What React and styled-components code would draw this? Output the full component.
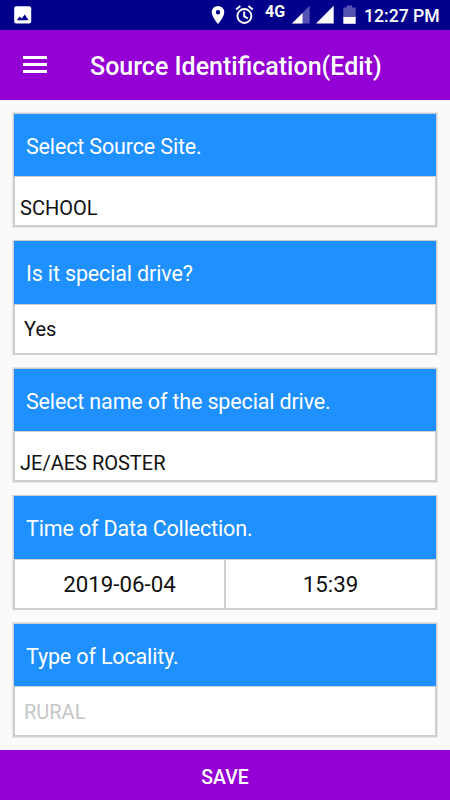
import React from 'react';
import styled, { createGlobalStyle } from 'styled-components';

const GlobalStyle = createGlobalStyle`
  * {
    box-sizing: border-box;
  }
  body {
    margin: 0;
    background: #fafafa;
    font-family: Roboto, sans-serif;
  }`

const Screen = styled.div`
  display: flex;
  flex-direction: column;
  width: 450px;
  height: 800px;
  overflow: hidden;
  background: #fafafa;`

const StatusBar = styled.div`
  display: flex;
  flex: 0 0 30px;
  justify-content: space-between;
  background: #00008b;
  color: #fff;`

const StatusIcons = styled.svg`
  display: block;
  width: ${props => props.$width}px;
  height: 30px;`

const StatusRight = styled.div`
  display: flex;
  width: 250px;
  height: 30px;`

const Network = styled.span`
  width: 27px;
  padding-left: 3px;
  font-size: 16px;
  font-weight: 700;
  line-height: 23px;
  white-space: nowrap;`

const Clock = styled.span`
  padding: 2px 0 0 8px;
  font-size: 17.6px;
  font-weight: 500;
  line-height: 29px;
  white-space: nowrap;`

const TopBar = styled.header`
  display: flex;
  flex: 0 0 70px;
  align-items: center;
  padding-left: 23px;
  background: #9400d3;
  color: #fff;`

const MenuButton = styled.div`
  display: flex;
  flex-direction: column;
  gap: 4px;
  width: 24px;
  margin: 0 43px 1px 0;
  span {
    height: 3px;
    background: #fff;
  }`

const Title = styled.h1`
  margin: 3px 0 0;
  font-size: 25px;
  font-weight: 500;
  line-height: 30px;
  white-space: nowrap;`

const Form = styled.main`
  display: flex;
  flex: 1;
  flex-direction: column;
  gap: 12px;
  min-height: 0;
  padding: 12px 12px 0;`

const Card = styled.section`
  flex: 0 0 auto;
  border: 1px solid #e6e6e6;
  border-top-width: ${props => props.$offset ? 0 : 1}px;
  border-bottom-width: ${props => props.$offset ? 0 : 1}px;`

const Question = styled.div`
  height: ${props => props.$offset ? 64 : 63}px;
  padding: 4px 0 0 12px;
  border: 1px solid #ccccd2;
  border-bottom: 0;
  background: #1e90ff;
  color: #fff;
  font-size: 21.5px;
  letter-spacing: -0.15px;
  line-height: 58px;
  white-space: nowrap;`

const Answers = styled.div`
  display: flex;
  height: 51px;
  border: 2px solid #cfcfcf;
  border-top-width: 1px;
  background: #fff;`

const Answer = styled.div`
  flex: 1;
  padding-left: ${props => props.$left || 0}px;
  padding-top: ${props => props.$top || 0}px;
  color: ${props => props.$disabled ? '#c6c6c6' : '#111'};
  font-size: ${props => props.$center ? 22.3 : 20}px;
  line-height: 48px;
  text-align: ${props => props.$center ? 'center' : 'left'};
  & + & {
    border-left: 2px solid #cfcfcf;
  }`

const SaveButton = styled.button`
  flex: 0 0 50px;
  padding: 5px 0 0;
  border: 0;
  background: #9400d3;
  color: #fff;
  font-family: inherit;
  font-size: 19.4px;
  font-weight: 500;`

const Field = ({ label, offset, children }) => (
  <Card $offset={offset}>
    <Question $offset={offset}>{label}</Question>
    <Answers>{children}</Answers>
  </Card>
)

const App = () => {
  return (
    <Screen>
      <GlobalStyle />
      <StatusBar>
        <StatusIcons $width={60} viewBox="0 0 60 30">
          <rect x="14.2" y="6.2" width="17" height="17.3" rx="2" fill="#fff" />
          <path d="M16.8 20.2l2.8-3.7 2 2 3.2-4 3.8 5.7z" fill="#00008b" />
        </StatusIcons>
        <StatusRight>
          <StatusIcons $width={62} viewBox="0 0 62 30">
            <path fillRule="evenodd" d="M18 6a6.3 6.3 0 0 0-6.3 6.3C11.7 17 18 24 18 24s6.3-7 6.3-11.7A6.3 6.3 0 0 0 18 6zm0 4a2.2 2.2 0 1 1 0 4.4 2.2 2.2 0 0 1 0-4.4z" fill="#fff" />
            <g fill="none" stroke="#fff" strokeWidth="1.9">
              <circle cx="44.4" cy="16" r="7" />
              <path d="M44.2 11.5v4.9l3.6 2.1M36.1 9.6l4.2-3.5M52.7 9.6l-4.2-3.5" />
            </g>
          </StatusIcons>
          <Network>4G</Network>
          <StatusIcons $width={67} viewBox="289 0 67 30">
            <path d="M292 23.5L309.7 5.8v17.7z" fill="#5653b5" />
            <path d="M292 23.5L302.5 13v10.5z" fill="#fff" />
            <path d="M316 23.5L333.7 5.8v17.7z" fill="#fff" />
            <path d="M343.3 17V7.6h3.5V5.6h5.2v2h3.7V17z" fill="#5653b5" />
            <path d="M343.3 17h12.4v6.8h-12.4z" fill="#fff" />
          </StatusIcons>
          <Clock>12:27 PM</Clock>
        </StatusRight>
      </StatusBar>
      <TopBar>
        <MenuButton><span /><span /><span /></MenuButton>
        <Title>Source Identification(Edit)</Title>
      </TopBar>
      <Form>
        <Field label="Select Source Site.">
          <Answer $left={5} $top={7}>SCHOOL</Answer>
        </Field>
        <Field label="Is it special drive?" offset>
          <Answer $left={9}>Yes</Answer>
        </Field>
        <Field label="Select name of the special drive.">
          <Answer $left={5} $top={7}>JE/AES ROSTER</Answer>
        </Field>
        <Field label="Time of Data Collection." offset>
          <Answer $center>2019-06-04</Answer>
          <Answer $center>15:39</Answer>
        </Field>
        <Field label="Type of Locality.">
          <Answer $left={9} $top={1} $disabled>RURAL</Answer>
        </Field>
      </Form>
      <SaveButton>SAVE</SaveButton>
    </Screen>
  )
}

export default App;
